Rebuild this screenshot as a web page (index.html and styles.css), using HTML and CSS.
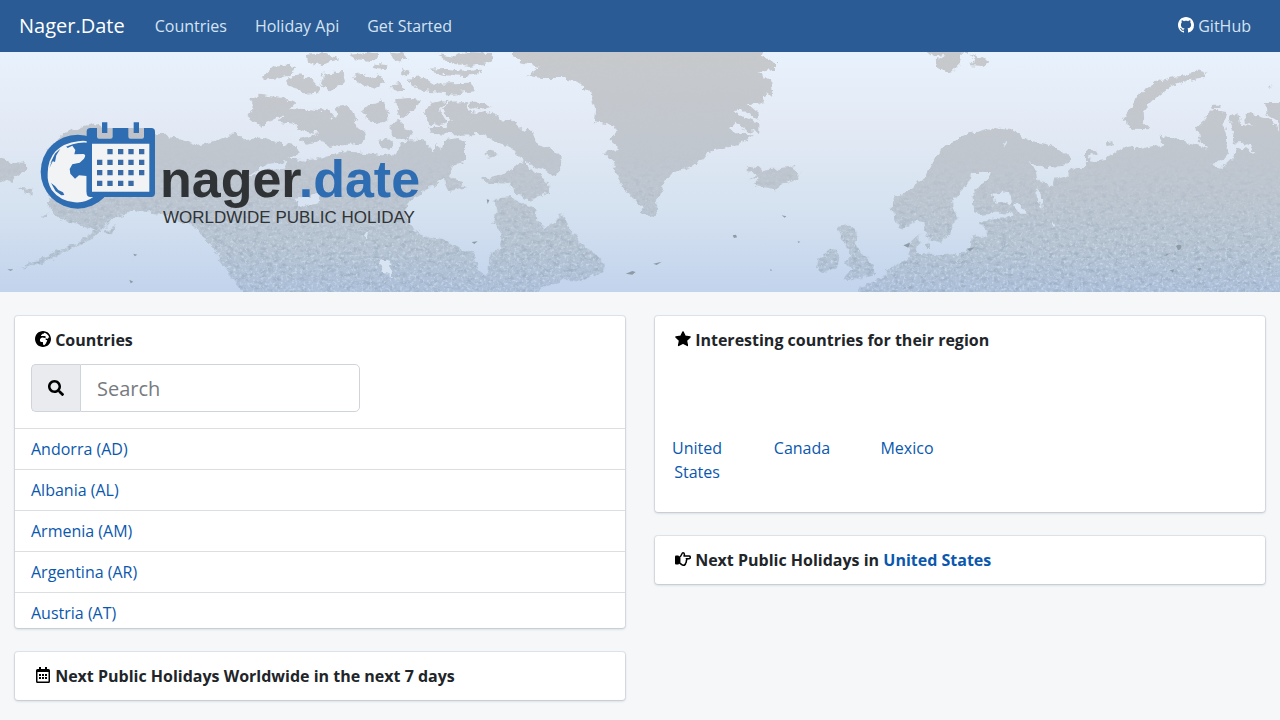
FILE: index.html
```html
<!DOCTYPE html>
<html lang="en">
<head>
<meta charset="utf-8">
<meta name="viewport" content="width=device-width, initial-scale=1">
<title>Nager.Date - Worldwide Public Holiday</title>
<link rel="stylesheet" href="styles.css">
</head>
<body>
<nav class="navbar">
  <a class="brand" href="#">Nager.Date</a>
  <a class="nav-link" href="#">Countries</a>
  <a class="nav-link" href="#">Holiday Api</a>
  <a class="nav-link" href="#">Get Started</a>
  <a class="nav-link nav-right" href="#"><svg class="icon icon-light" viewBox="0 0 16 16" aria-hidden="true"><path d="M8 0C3.58 0 0 3.58 0 8c0 3.54 2.29 6.53 5.47 7.59.4.07.55-.17.55-.38 0-.19-.01-.82-.01-1.49-2.01.37-2.53-.49-2.69-.94-.09-.23-.48-.94-.82-1.13-.28-.15-.68-.52-.01-.53.63-.01 1.08.58 1.23.82.72 1.21 1.87.87 2.33.66.07-.52.28-.87.51-1.07-1.78-.2-3.64-.89-3.64-3.95 0-.87.31-1.59.82-2.15-.08-.2-.36-1.02.08-2.12 0 0 .67-.21 2.2.82.64-.18 1.32-.27 2-.27s1.36.09 2 .27c1.53-1.04 2.2-.82 2.2-.82.44 1.1.16 1.92.08 2.12.51.56.82 1.27.82 2.15 0 3.07-1.87 3.75-3.65 3.95.29.25.54.73.54 1.48 0 1.07-.01 1.93-.01 2.2 0 .21.15.46.55.38A8.01 8.01 0 0016 8c0-4.42-3.58-8-8-8z"/></svg> GitHub</a>
</nav>

<header class="hero">
  <svg class="hero-map" viewBox="0 0 3840 720" preserveAspectRatio="xMidYMid slice" aria-hidden="true">
    <defs>
      <linearGradient id="sea" x1="0" y1="0" x2="0" y2="1">
        <stop offset="0" stop-color="#e8f2fc"/><stop offset=".3" stop-color="#e3eaf5"/>
        <stop offset=".65" stop-color="#d5e2f0"/><stop offset="1" stop-color="#c2d3ec"/>
      </linearGradient>
      <linearGradient id="ground" gradientUnits="userSpaceOnUse" x1="0" y1="0" x2="0" y2="720">
        <stop offset="0" stop-color="#c7c9cc"/><stop offset=".5" stop-color="#bfc6cf"/>
        <stop offset=".8" stop-color="#b7c4d2"/><stop offset="1" stop-color="#adc0da"/>
      </linearGradient>
      <linearGradient id="fade" gradientUnits="userSpaceOnUse" x1="0" y1="300" x2="0" y2="600">
        <stop offset="0" stop-color="#000"/><stop offset="1" stop-color="#fff"/>
      </linearGradient>
      <filter id="coast" filterUnits="userSpaceOnUse" x="0" y="0" width="3840" height="720" color-interpolation-filters="sRGB">
        <feTurbulence type="fractalNoise" baseFrequency=".05" numOctaves="3" seed="4" result="n"/>
        <feDisplacementMap in="SourceGraphic" in2="n" scale="24" xChannelSelector="R" yChannelSelector="G"/>
      </filter>
      <filter id="relief" filterUnits="userSpaceOnUse" x="0" y="0" width="3840" height="720" color-interpolation-filters="sRGB">
        <feTurbulence type="fractalNoise" baseFrequency=".05 .08" numOctaves="4" seed="8"/>
        <feColorMatrix values="0 0 0 0 .5  0 0 0 0 .57  0 0 0 0 .64  2.4 0 0 0 -1.1" result="t"/>
        <feComposite in="t" in2="SourceGraphic" operator="in"/>
      </filter>
      <filter id="glints" filterUnits="userSpaceOnUse" x="0" y="0" width="3840" height="720" color-interpolation-filters="sRGB">
        <feTurbulence type="fractalNoise" baseFrequency=".12" numOctaves="3" seed="21"/>
        <feColorMatrix values="0 0 0 0 .84  0 0 0 0 .9  0 0 0 0 .95  0 2.6 0 0 -1.3" result="t"/>
        <feComposite in="t" in2="SourceGraphic" operator="in"/>
      </filter>
      <mask id="south"><path fill="url(#fade)" d="M0 0H3840V720H0z"/></mask>
      <g id="land">
        <path d="M140 290L190 245 240 225 285 214 330 235 465 250 500 248 545 265 590 282 640 268 690 252 705 238 735 265 790 255 840 275 890 282 900 305 860 315 930 325 990 310 1030 298 1120 305 1180 315 1205 275 1230 262 1270 265 1300 300 1310 272 1330 310 1370 330 1345 365 1310 395 1270 420 1225 450 1215 485 1235 530 1275 553 1330 562 1380 590 1420 598 1428 640 1450 668 1465 668 1468 610 1500 585 1508 545 1480 512 1490 480 1483 440 1530 435 1575 455 1610 475 1612 508 1640 527 1665 510 1683 480 1710 530 1740 572 1790 610 1815 635 1810 660 1745 685 1690 685 1640 700 1600 730H735L700 680 665 630 650 600 620 570 590 530 565 512 500 490 440 480 400 470 375 488 340 498 310 530 270 565 200 598 130 632 60 648 100 628 170 598 240 568 285 532 250 520 200 512 160 482 142 462 155 440 135 400 140 340z"/>
        <path d="M-20 310L30 330 70 332 82 350 50 370 35 392 10 385-20 392zM50 408L98 415 92 428 60 415zM310 540L345 520 335 550zM122 488l25-3-8 8z"/>
        <path d="M748 140L780 128 850 138 890 152 868 175 835 195 780 222 742 192 760 170zM845 185L880 168 960 175 985 170 1000 200 1010 195 1005 165 1040 160 1058 180 1070 225 1100 245 1085 275 1030 280 990 285 965 268 920 278 895 262 960 245 905 235 880 215 840 210z"/>
        <path d="M785 75L820 45 860 38 885 45 875 65 830 82 805 85zM865 75L900 70 935 80 950 95 960 120 920 125 890 110 865 105zM920 8L975 3 1015 22 950 40 925 32zM970 65L1025 60 1035 90 990 115 960 105zM1055 75L1085 65 1110 80 1140 65 1155 90 1125 110 1095 100zM1175 100L1205 95 1215 115 1185 120z"/>
        <path d="M1225 80L1270 75 1300 95 1410 92 1425 118 1360 125 1290 120 1245 110zM1280 50L1340 48 1400 55 1445 50 1435 70 1385 75 1330 68zM1310 5L1360 15 1400 0 1480 3 1475 32 1410 42 1340 32zM1050 8L1100 3 1140 10 1120 28 1070 22zM1125 35L1165 40 1150 55 1120 48zM1205 50L1230 60 1215 75zM1170 4h42l12 18-40 6z"/>
        <path d="M1082 180L1110 155 1145 142 1158 165 1165 200 1140 215 1110 205zM1185 142L1225 138 1260 145 1245 172 1200 195 1190 168zM1172 220L1200 202 1215 225 1240 240 1225 262 1190 260 1172 245zM1275 180L1290 155 1320 148 1340 150 1320 170 1325 192 1345 215 1320 222 1285 212zM1135 265L1160 258 1180 275 1170 290 1140 283z"/>
        <path d="M1325 170L1345 152 1400 150 1405 175 1440 182 1475 178 1500 205 1540 210 1565 232 1600 240 1615 280 1655 290 1690 325 1680 355 1665 375 1630 350 1600 345 1560 315 1530 285 1490 270 1450 245 1385 248 1290 242 1285 225 1340 225 1355 205zM1405 152L1445 152 1475 165 1440 175 1415 168zM1330 265L1375 258 1395 275 1395 325 1365 340 1330 325 1320 300zM1325 375L1345 360 1370 390 1400 405 1345 418zM1445 380L1500 370 1545 345 1575 325 1590 355 1615 365 1640 390 1645 420 1590 445 1550 425 1530 395 1460 392zM1455 300L1480 295 1490 310 1465 320z"/>
        <path d="M1525-20H2290L2282 12 2325 32 2325 52 2275 62 2310 85 2315 115 2285 135 2295 150 2275 158 2240 150 2272 178 2275 200 2220 172 2200 180 2278 215 2278 240 2240 238 2210 212 2190 235 2215 248 2262 250 2220 275 2170 290 2125 300 2105 325 2060 350 2015 362 1995 385 1985 420 1975 440 1970 475 1955 492 1922 480 1925 465 1880 420 1860 395 1845 345 1830 320 1810 300 1860 290 1825 262 1850 240 1840 220 1782 210 1785 170 1770 120 1745 95 1690 78 1625 78 1580 72 1620 45 1560 30z"/>
        <path d="M2245 342L2270 345 2285 360 2300 352 2345 348 2370 345 2380 340 2398 365 2390 382 2350 395 2325 412 2290 405 2265 398 2278 382 2250 378 2275 368 2243 360z"/>
        <path d="M2515 525L2545 518 2572 540 2565 575 2590 610 2625 640 2622 670 2580 680 2530 685 2545 665 2560 650 2535 635 2555 610 2525 560zM2455 620L2490 590 2515 595 2515 640 2475 662 2450 655zM2285 30l35 8 5 10-40-5zM2290 115l28-2-5 18z"/>
        <g transform="translate(2880)">
          <path d="M740 60L735 75 700 82 640 100 600 125 570 155 548 180 550 210 572 232 520 230 485 205 505 180 525 150 555 110 600 85 640 75 690 65 715 52z"/>
          <path d="M-110-10L-75 15-40 5-65 22-72 42-30 65 0 35 5 5 30 5 88 28 70 42 30 40 48 25 15-10z"/>
          <path d="M-2 255L-55 290-80 330-100 370-130 400-200 440-202 470-195 510-170 530-130 505-110 515-95 565-60 572-30 550-25 520-2 495-20 465-20 440 0 420 35 385 40 360 95 360 90 380 50 410 38 430 40 470 60 485 150 480 165 490 100 500 60 515 80 535 80 555 40 550 35 580 15 605-60 610-130 605-122 545-160 580-145 620-200 640-240 680-300 705-310 730H980V150H915L920 185 950 205 955 240 930 200 900 195 875 188 850 190 855 210 885 225 840 215 835 180 815 190 810 215 822 240 815 275 850 272 875 285 880 310 858 290 832 285 820 320 790 345 750 338 780 330 805 300 800 250 790 215 798 180 755 172 735 205 712 225 718 260 742 290 700 275 640 258 620 258 595 245 615 280 600 290 580 282 520 295 515 283 470 295 430 325 395 330 385 315 410 300 405 292 375 290V345L345 345 315 375 285 380 280 400 235 385 230 355 200 330 260 348 310 345 332 320 290 285 240 272 205 265 180 245 150 230 100 225 60 238 20 245z"/>
          <path d="M435 268l25-3 2 15-22 2zM755 158l25 0-2 10-20 0zM865 185l20-2-5 10zM-105 578l15-5 0 15-15 0zM930 98l8 0-2 7z"/>
        </g>
      </g>
    </defs>
    <path fill="url(#sea)" d="M0 0H3840V720H0z"/>
    <g filter="url(#coast)">
      <g fill="url(#ground)"><use href="#land"/></g>
    </g>
    <g mask="url(#south)">
      <g filter="url(#relief)" opacity=".4"><use href="#land"/></g>
      <g filter="url(#glints)" opacity=".7"><use href="#land"/></g>
    </g>
    <g fill="#d8e4f1" filter="url(#coast)">
      <path d="M735 380L800 335 860 330 850 350 790 358zM880 440L960 425 955 450 900 465zM1095 550L1110 530 1100 565zM1135 620L1165 630 1180 685 1150 655zM3040 455L3065 455 3080 485 3050 485zM3108 405L3125 430 3128 470 3112 450zM2975 425L3030 420 3035 450 2985 455zM3150 505L3170 520 3160 530zM3005 278l15-10-5 15z"/>
    </g>
    <g fill="#8e9ba6">
      <path d="M1877 665l20-8 10 3-10 8zM2198 550l10-2 3 8-9 2zM2345 490l14 3-5 4zM2393 568l8 1-6 4zM1960 635l25-6-15 10zM3528 582q10-8 16 0 0 12-10 12zM3490 610l20-7-10 8zM3510 655l12-3-3 10zM400 605l12 3-8 5zM388 683l12 6-8 5zM22 652l18 0-8 5zM2710 580l20-8-5 15zM1460 442l8 2-5 12zM1415 570l18-2-10 8zM2310 652l7 2-5 3zM3590 650l14-3-4 10zM2900 590l24-4-14 12z"/>
    </g>
  </svg>
  <div class="logo">
    <svg class="logo-mark" viewBox="30 36 348 264" aria-hidden="true">
      <circle cx="143" cy="185" r="111" fill="#2f6db3"/>
      <path d="M53 190Q55 105 145 94Q160 91 171 94V98Q158 97 145 99Q75 110 58 175Q68 153 78 136Q84 116 98 116L106 108 113 114 127 107 136 120 133 133 160 132Q170 134 162 146L149 158 127 163 119 177 121 191 135 206 147 196 170 198V247Q178 256 194 258Q166 280 134 277Q90 273 65 240Q51 217 53 190z" fill="#f2f3f5"/>
      <path d="M61 160L75 131 91 116 79 136 75 156 67 153zM63 219L75 228 85 240 99 247 103 255 94 256 77 244z" fill="#2f6db3"/>
      <rect x="170" y="54" width="205" height="207" rx="11" fill="#2f6db3"/>
      <path d="M186 101H358V245H186z" fill="#f2f3f5"/>
      <path d="M201 54H248V80Q248 86 242 86H207Q201 86 201 80zM295 54H342V80Q342 86 336 86H301Q295 86 295 80z" fill="#bfc3c9"/>
      <path d="M216 37h16v32h-16zM311 37h16v32h-16z" fill="#2f6db3"/>
      <path d="M232 117h16v16h-16zM264 117h16v16h-16zM295 117h16v16h-16zM327 117h16v16h-16zM201 149h16v16h-16zM232 149h16v16h-16zM264 149h16v16h-16zM295 149h16v16h-16zM327 149h16v16h-16zM201 180h16v16h-16zM232 180h16v16h-16zM264 180h16v16h-16zM295 180h16v16h-16zM327 180h16v16h-16zM201 212h16v16h-16zM232 212h16v16h-16zM264 212h16v16h-16zM295 212h16v16h-16z" fill="#3a6ba6"/>
    </svg>
    <div class="logo-text">
      <div class="wordmark">nager<span class="wordmark-accent">.date</span></div>
      <div class="tagline">WORLDWIDE PUBLIC HOLIDAY</div>
    </div>
  </div>
</header>

<main class="columns">
  <div class="column">
    <section class="card">
      <h2 class="card-title"><svg class="icon" viewBox="0 8 496 496" aria-hidden="true"><path d="M248 8C111.03 8 0 119.03 0 256s111.03 248 248 248 248-111.03 248-248S384.97 8 248 8zm160 215.500v6.930c0 5.870-3.320 11.240-8.570 13.860l-15.390 7.700a15.485 15.485 0 0 1-15.530-.970l-18.210-12.140a15.520 15.520 0 0 0-13.500-1.810l-2.650.88c-9.700 3.230-13.660 14.790-7.990 23.300l13.240 19.860c2.870 4.310 7.710 6.900 12.890 6.900h8.210c8.560 0 15.500 6.940 15.500 15.500v11.340c0 3.350-1.090 6.620-3.100 9.300l-18.740 24.980c-1.420 1.900-2.390 4.100-2.830 6.430l-4.300 22.830c-.62 3.290-2.290 6.290-4.760 8.560a159.608 159.608 0 0 0-25 29.160l-13.030 19.550a27.756 27.756 0 0 1-23.090 12.360c-10.510 0-20.120-5.940-24.820-15.340a78.902 78.902 0 0 1-8.330-35.290V367.500c0-8.560-6.940-15.500-15.500-15.500h-25.880c-14.490 0-28.380-5.760-38.630-16a54.659 54.659 0 0 1-16-38.630v-14.060c0-17.190 8.100-33.380 21.850-43.700l27.580-20.690a54.663 54.663 0 0 1 32.780-10.930h.89c8.480 0 16.850 1.970 24.430 5.770l14.720 7.360c3.680 1.840 7.930 2.140 11.830.84l47.310-15.770c6.330-2.110 10.600-8.030 10.600-14.700 0-8.560-6.940-15.500-15.500-15.500h-10.090c-4.110 0-8.050-1.630-10.960-4.540l-6.920-6.920a15.493 15.493 0 0 0-10.960-4.540H199.500c-8.560 0-15.500-6.940-15.500-15.500v-4.400c0-7.110 4.840-13.310 11.740-15.040l14.450-3.610c3.740-.94 7-3.230 9.140-6.440l8.080-12.110c2.870-4.310 7.710-6.900 12.890-6.900h24.210c8.560 0 15.500-6.940 15.500-15.500v-21.700C359.230 71.630 422.860 131.020 441.930 208H423.500c-8.560 0-15.500 6.940-15.500 15.500z"/></svg> Countries</h2>
      <div class="search">
        <label class="search-label" for="search" aria-label="Search"><svg class="icon" viewBox="0 0 512 512" aria-hidden="true"><path d="M505 442.7L405.3 343c-4.5-4.5-10.6-7-17-7H372c27.6-35.3 44-79.7 44-128C416 93.1 322.9 0 208 0S0 93.1 0 208s93.1 208 208 208c48.3 0 92.7-16.4 128-44v16.3c0 6.4 2.5 12.5 7 17l99.7 99.7c9.4 9.4 24.6 9.4 33.9 0l28.3-28.3c9.4-9.4 9.4-24.6.1-34zM208 336c-70.7 0-128-57.2-128-128 0-70.7 57.2-128 128-128 70.7 0 128 57.2 128 128 0 70.7-57.2 128-128 128z"/></svg></label>
        <input class="search-input" id="search" type="text" placeholder="Search">
      </div>
      <ul class="country-list">
        <li class="country"><a href="#">Andorra (AD)</a></li>
        <li class="country"><a href="#">Albania (AL)</a></li>
        <li class="country"><a href="#">Armenia (AM)</a></li>
        <li class="country"><a href="#">Argentina (AR)</a></li>
        <li class="country"><a href="#">Austria (AT)</a></li>
      </ul>
    </section>
    <section class="card">
      <h2 class="card-title"><svg class="icon" viewBox="0 0 16 16" aria-hidden="true"><path fill-rule="evenodd" d="M4 0h2v2h4V0h2v2h1.500Q15 2 15 3.500v11Q15 16 13.500 16h-11Q1 16 1 14.500v-11Q1 2 2.500 2H4zM2.500 5v9.500h11V5z"/><path d="M4 7h2v2H4zM7 7h2v2H7zM10 7h2v2h-2zM4 10h2v2H4zM7 10h2v2H7zM10 10h2v2h-2z"/></svg> Next Public Holidays Worldwide in the next 7 days</h2>
    </section>
  </div>
  <div class="column">
    <section class="card">
      <h2 class="card-title"><svg class="icon" viewBox="0 0 16 16" aria-hidden="true"><path stroke="#000" stroke-width="1.400" stroke-linejoin="round" d="M8 .9L10.200 5.300 15.100 6 11.500 9.500 12.400 14.500 8 12.200 3.600 14.500 4.500 9.500 .9 6 5.800 5.300z"/></svg> Interesting countries for their region</h2>
      <div class="regions">
        <a class="region" href="#">United States</a>
        <a class="region" href="#">Canada</a>
        <a class="region" href="#">Mexico</a>
      </div>
    </section>
    <section class="card">
      <h2 class="card-title"><svg class="icon" viewBox="0 0 16 16" aria-hidden="true"><rect y="4.500" width="4" height="9" rx="1"/><path fill="none" stroke="#000" stroke-width="1.500" stroke-linejoin="round" d="M4.700 6C6.500 5.300 6.700 1.800 8 1.800 9.800 1.800 9.500 4 9 5H14Q15.300 5 15.300 6.300T14 7.700H11.300Q12.300 8.800 11.200 10 11.700 11.300 10.600 12.100 10.500 14.200 8.500 14.200C6.500 14.200 6 12.500 4.700 12.300z"/></svg> Next Public Holidays in <a href="#">United States</a></h2>
    </section>
  </div>
</main>
</body>
</html>
```
FILE: styles.css
```css
* { box-sizing: border-box; }
body {
  margin: 0;
  background: #f5f7f9;
  color: #212529;
  font: 16px/24px "Open Sans", sans-serif;
}
a { color: #0a58ae; text-decoration: none; }
.icon { width: 16px; height: 16px; vertical-align: -1px; }
.icon-light { fill: #fff; }

.navbar {
  display: flex;
  align-items: center;
  min-height: 52px;
  padding: 0 15px 0 19px;
  background: #2a5b94;
}
.brand { margin-right: 16px; color: #fff; font-size: 20px; line-height: 30px; }
.nav-link { padding: 8px 14px; color: #d5e3f3; }
.nav-right { margin-left: auto; }

.hero {
  position: relative;
  min-height: 240px;
  padding: 70px 40px 60px;
  overflow: hidden;
}
.hero-map { position: absolute; inset: 0; width: 100%; height: 100%; }
.logo { position: relative; display: flex; gap: 4px; }
.logo-mark { flex: none; width: 116px; height: 88px; }
.logo-text { padding-top: 31px; font-family: "Liberation Sans", sans-serif; color: #303335; }
.wordmark { font-size: 52px; font-weight: bold; line-height: 52px; }
.wordmark-accent { color: #2f6db3; }
.tagline { padding-left: 3px; font-size: 17px; line-height: 26px; }

.columns {
  display: grid;
  grid-template-columns: repeat(auto-fit, minmax(min(100%, 400px), 1fr));
  gap: 24px 30px;
  padding: 24px 15px;
  align-items: start;
}
.column { display: grid; gap: 24px; }
.card {
  overflow: hidden;
  border-radius: 3px;
  background: #fff;
  box-shadow: 0 0 0 1px rgba(20, 50, 80, .08), 0 1px 3px rgba(20, 40, 60, .2);
}
.card-title { margin: 0; padding: 12px 20px; font-size: 16px; font-weight: 700; line-height: 24px; }

.search { display: flex; width: 329px; max-width: calc(100% - 32px); margin: 0 16px 16px; }
.search-label {
  display: grid;
  place-items: center;
  flex: none;
  width: 49px;
  border: 1px solid #ced4da;
  border-right: 0;
  border-radius: 5px 0 0 5px;
  background: #e9ebef;
}
.search-input {
  flex: 1;
  min-width: 0;
  height: 48px;
  padding: 8px 16px;
  border: 1px solid #ced4da;
  border-radius: 0 5px 5px 0;
  background: #fff;
  color: #495057;
  font: 20px/30px "Open Sans", sans-serif;
}
.search-input::placeholder { color: #777b7f; opacity: 1; }

.country-list { height: 200px; margin: 0; padding: 0; overflow: hidden; list-style: none; }
.country { padding: 8px 16px; border-top: 1px solid #dcdfe2; }

.regions { display: flex; flex-wrap: wrap; gap: 31px; padding: 72px 5px 28px; }
.region { width: 74px; text-align: center; }
```
